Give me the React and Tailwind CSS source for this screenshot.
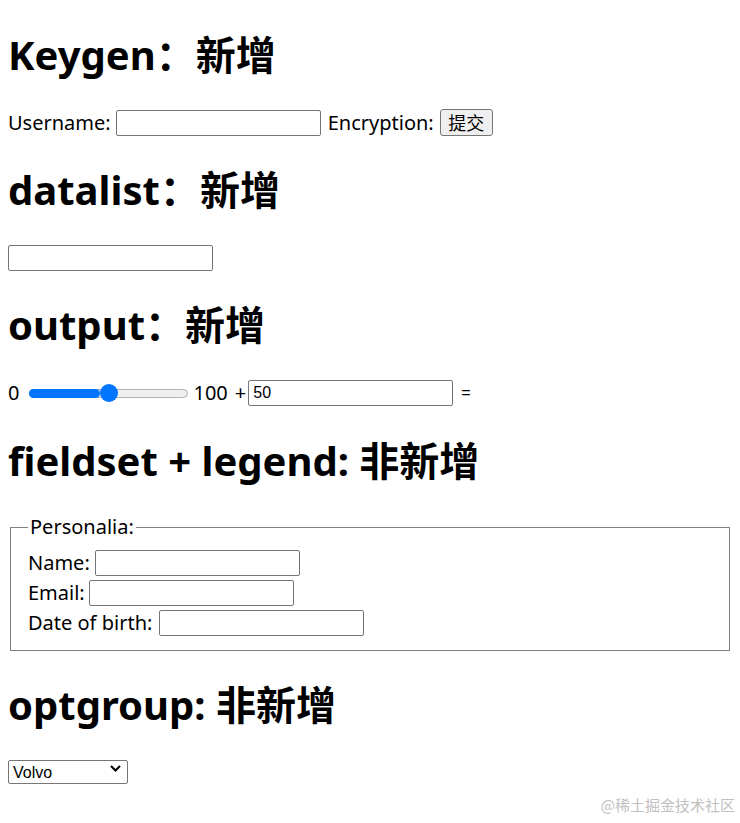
import { useState } from "react";

const font = "font-['Noto_Sans','Noto_Sans_CJK_SC',sans-serif]";
const textInput =
  "h-[26px] w-[205px] rounded-[2px] border border-[#767676] bg-white px-[4px] font-['Liberation_Sans',Arial,sans-serif] text-[16px] text-black outline-none";

const Heading = ({ children }) => (
  <h1 className="my-[30px] text-[40px] font-bold leading-[48px] text-black">{children}</h1>
);

const Slider = ({ value }) => (
  <div className="relative ml-[10px] flex h-[20px] w-[159px] items-center">
    <div className="h-[9px] w-full rounded-full border border-[#b2b2b2] bg-[#efefef]" />
    <div
      className="absolute left-0 top-[5.5px] h-[9px] rounded-full bg-[#0075ff]"
      style={{ width: `${value * 0.81 + 4}%` }}
    />
    <div
      className="absolute top-[1px] h-[18px] w-[18px] rounded-full bg-[#0075ff]"
      style={{ left: `calc(${value * 0.89}% )` }}
    />
  </div>
);

const App = () => {
  const [num] = useState("50");

  return (
    <div className={`${font} min-h-[823px] bg-white px-[8px] pt-[1px] text-[20px] text-black`}>
      <Heading>Keygen：新增</Heading>
      <div className="flex h-[27px] items-center">
        <span>Username:</span>
        <input className={`${textInput} ml-[5px]`} />
        <span className="ml-[7px]">Encryption:</span>
        <button className="ml-[6px] h-[27px] w-[53px] rounded-[3px] border border-[#767676] bg-[#efefef] text-[18px] leading-none">
          提交
        </button>
      </div>

      <Heading>datalist：新增</Heading>
      <div className="flex h-[27px] items-center">
        <input className={textInput} list="browsers" />
      </div>

      <Heading>output：新增</Heading>
      <div className="flex h-[28px] items-center">
        <span>0</span>
        <Slider value={50} />
        <span className="ml-[5px]">100</span>
        <span className="ml-[7px]">+</span>
        <input className={`${textInput} ml-[2px]`} defaultValue={num} />
        <span className="ml-[8px] font-['Liberation_Sans',sans-serif] text-[16px]">=</span>
      </div>

      <Heading>fieldset + legend: 非新增</Heading>
      <fieldset className="mx-[2px] border border-[#808080] pb-[12px] pl-[17px] pr-[12px] pt-[9px]">
        <legend className="px-[2px] leading-[24px]">Personalia:</legend>
        <div className="flex h-[30px] items-center">
          <span>Name:</span>
          <input className={`${textInput} ml-[5px]`} />
        </div>
        <div className="flex h-[30px] items-center">
          <span>Email:</span>
          <input className={`${textInput} ml-[4px]`} />
        </div>
        <div className="flex h-[30px] items-center">
          <span>Date of birth:</span>
          <input className={`${textInput} ml-[7px]`} />
        </div>
      </fieldset>

      <Heading>optgroup: 非新增</Heading>
      <div className="relative -mt-[3px] h-[24px] w-[120px]">
        <select className="h-[24px] w-[120px] appearance-none rounded-[2px] border border-[#767676] bg-white pl-[4px] font-['Liberation_Sans',Arial,sans-serif] text-[16px] text-black">
          <optgroup label="Swedish Cars">
            <option>Volvo</option>
            <option>Saab</option>
          </optgroup>
          <optgroup label="German Cars">
            <option>Mercedes</option>
            <option>Audi</option>
          </optgroup>
        </select>
        <svg
          className="pointer-events-none absolute right-[7px] top-[9px]"
          width="11"
          height="7"
          viewBox="0 0 11 7"
        >
          <path d="M1 1l4.5 4.5L10 1" fill="none" stroke="#000" strokeWidth="2" />
        </svg>
      </div>

      <div className="-mr-[3px] mt-[15px] text-right font-['Noto_Sans_CJK_SC',sans-serif] text-[15px] leading-[20px] text-[#c0c0c0]">
        @稀土掘金技术社区
      </div>
    </div>
  );
};

export default App;
